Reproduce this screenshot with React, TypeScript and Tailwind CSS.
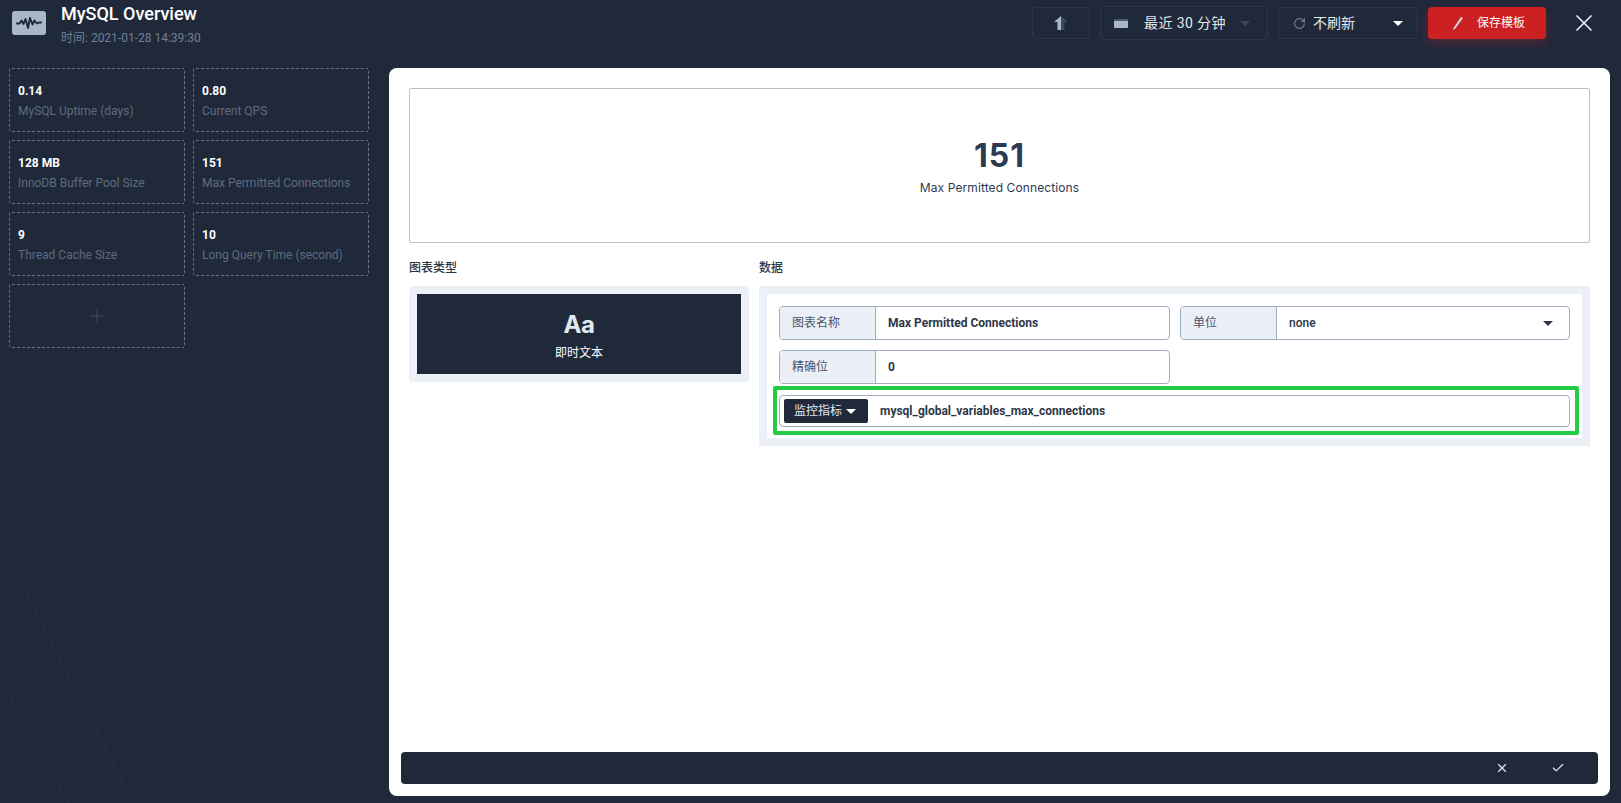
import React from 'react';
import { X, Check, Plus, RotateCw } from 'lucide-react';

const stats = [
  { value: '0.14', label: 'MySQL Uptime (days)' },
  { value: '0.80', label: 'Current QPS' },
  { value: '128 MB', label: 'InnoDB Buffer Pool Size' },
  { value: '151', label: 'Max Permitted Connections' },
  { value: '9', label: 'Thread Cache Size' },
  { value: '10', label: 'Long Query Time (second)' },
];

function Caret({ className = '' }: { className?: string }) {
  return (
    <svg width="10" height="5" viewBox="0 0 10 5" className={className}>
      <path d="M0 0h10L5 5z" fill="currentColor" />
    </svg>
  );
}

function Field({ label, value, caret = false, medium = false }: { label: string; value: string; caret?: boolean; medium?: boolean }) {
  return (
    <div className="flex h-[34px] rounded border border-[#a0aec0]">
      <div className="flex w-[96px] shrink-0 items-center rounded-l-[3px] border-r border-[#a0aec0] bg-[#ebf0f8] pl-3 text-[12px] text-[#4a5568]">{label}</div>
      <div className={`flex flex-1 items-center justify-between pl-3 pr-4 text-[12px] text-[#2d3748] ${medium ? 'font-medium' : 'font-bold'}`}>
        <span>{value}</span>
        {caret && <Caret className="text-[#2d3748]" />}
      </div>
    </div>
  );
}

export default function App() {
  return (
    <div className="relative flex h-[803px] w-[1621px] flex-col overflow-hidden bg-[#20293a] font-['Roboto','Noto_Sans_CJK_SC',sans-serif] text-white">
      {/* faint background streaks, bottom left */}
      <svg width="140" height="260" viewBox="0 0 140 260" fill="none" className="absolute bottom-0 left-0">
        <path d="M0 0L125 243" stroke="#263445" strokeWidth="1" />
        <path d="M0 135L68 260" stroke="#263445" strokeWidth="1" />
      </svg>

      {/* header */}
      <div className="relative flex h-[68px] shrink-0 px-3">
        <div className="mt-[11px] flex h-6 w-[34px] items-center justify-center rounded-[3px] bg-[#a9b8c6]">
          <svg width="28" height="16" viewBox="0 0 28 16" fill="none" stroke="#20293a" strokeWidth="1.9" strokeLinecap="round" strokeLinejoin="round">
            <path d="M2 8.5H4.5L6.5 5.5L8.5 9L10.5 4L13 13L15 3L17.5 9.5L19.5 5.5L22 8.5L24 7.5H26" />
          </svg>
        </div>
        <div className="ml-[15px]">
          <div className="mt-[3px] text-[18px] font-medium leading-[22px]">MySQL Overview</div>
          <div className="mt-[5px] text-[12px] leading-[16px] text-[#718096]">时间: 2021-01-28 14:39:30</div>
        </div>
        <div className="ml-auto mt-[6px] flex h-[34px] items-center gap-[10px] pr-[11px]">
          <div className="flex h-8 w-[58px] items-center justify-center rounded border border-[#2d3748]">
            <svg width="14" height="14" viewBox="0 0 14 14">
              <path d="M7 0L0 6h3.500v8H7z" fill="#a9b8c6" />
              <path d="M7 0l7 6h-3.500v8H7z" fill="#3c4a5c" />
            </svg>
          </div>
          <div className="flex h-[34px] w-[168px] items-center rounded border border-[#2d3748] pl-[13px]">
            <svg width="14" height="10" viewBox="0 0 14 10">
              <rect y="2" width="14" height="8" rx="1" fill="#a9b8c6" />
              <rect y="1" width="14" height="2" fill="#4a5a6c" />
            </svg>
            <span className="ml-[16px] text-[14px] tracking-[0.4px] text-[#e2e8f0]">最近 30 分钟</span>
            <Caret className="ml-[14px] text-[#3a4a5c]" />
          </div>
          <div className="flex h-8 w-[140px] items-center rounded border border-[#2d3748] pl-[14px]">
            <RotateCw size={13} className="text-[#718096]" />
            <span className="ml-[7px] text-[14px] text-[#e2e8f0]">不刷新</span>
            <Caret className="ml-[38px] text-white" />
          </div>
          <div className="flex h-8 w-[118px] items-center rounded bg-[#cc2023] pl-[25px] shadow-[0_4px_12px_rgba(204,32,35,0.3)]">
            <svg width="10" height="13" viewBox="0 0 10 13">
              <path d="M8 0L10 1L2 12L0 13L0.500 11z" fill="#d4d8de" />
            </svg>
            <span className="ml-[14px] text-[12px] text-[#f7fafc]">保存模板</span>
          </div>
          <X size={28} strokeWidth={1.5} className="ml-[14px] text-[#e2e8f0]" />
        </div>
      </div>

      <div className="relative flex flex-1 pb-[7px] pr-[11px]">
        {/* left stat cards */}
        <div className="grid w-[389px] shrink-0 grid-cols-[176px_176px] content-start gap-x-2 gap-y-2 pl-[9px]">
          {stats.map((s) => (
            <div key={s.label} className="h-[64px] rounded-[3px] border border-dashed border-[#667387] px-2 pt-[14px]">
              <div className="text-[12px] font-bold leading-[16px]">{s.value}</div>
              <div className="mt-1 text-[12px] leading-[16px] text-[#5f6b7d]">{s.label}</div>
            </div>
          ))}
          <div className="flex h-[64px] items-center justify-center rounded-[3px] border border-dashed border-[#667387]">
            <Plus size={24} strokeWidth={1} className="text-[#3a4d5e]" />
          </div>
        </div>

        {/* editor panel */}
        <div className="flex flex-1 flex-col rounded-lg bg-white px-3 pb-3 pt-5">
          <div className="mx-2 flex h-[155px] shrink-0 flex-col items-center justify-center rounded-[2px] border border-[#b8c2cc] pt-[2px] font-['Inter','Noto_Sans_CJK_SC',sans-serif]">
            <div className="text-[32px] font-bold leading-[38px] tracking-[1px] text-[#2d3a54]">151</div>
            <div className="mt-1 text-[12px] leading-[18px] tracking-[0.1px] text-[#2d3a54]">Max Permitted Connections</div>
          </div>
          <div className="mx-2 mt-[17px] flex flex-1 gap-[10px]">
            <div className="w-[340px] shrink-0">
              <div className="text-[12px] font-medium leading-[16px] text-[#2d3748]">图表类型</div>
              <div className="mt-[10px] rounded bg-[#ecf0f7] p-2">
                <div className="flex h-20 flex-col items-center justify-center bg-[#20293a] pt-[2px] font-['Inter','Noto_Sans_CJK_SC',sans-serif]">
                  <div className="text-[24px] font-bold leading-[30px] tracking-[-0.5px] text-[#e2e8f0]">Aa</div>
                  <div className="mt-[5px] text-[12px] leading-[16px] text-white">即时文本</div>
                </div>
              </div>
            </div>
            <div className="flex-1">
              <div className="text-[12px] font-medium leading-[16px] text-[#2d3748]">数据</div>
              <div className="mt-[10px] bg-[#ecf0f7] p-2">
                <div className="bg-white pb-[3px] pl-3 pr-3 pt-3">
                  <div className="grid grid-cols-[391px_390px] gap-x-[10px] gap-y-[10px]">
                    <Field label="图表名称" value="Max Permitted Connections" />
                    <Field label="单位" value="none" caret medium />
                    <Field label="精确位" value="0" />
                  </div>
                  <div className="-ml-[6px] -mr-[9px] mt-[2px] rounded-[2px] border-4 border-[#22cc44] pb-1 pl-[2px] pr-[5px] pt-[5px]">
                    <div className="flex h-8 items-center rounded border border-[#a0aec0] pl-1">
                      <div className="flex h-6 w-[84px] items-center gap-1 rounded-[2px] bg-[#20293a] pl-[10px] text-[12px] text-[#e2e8f0]">
                        监控指标
                        <Caret className="text-white" />
                      </div>
                      <span className="ml-3 text-[12px] font-bold text-[#2d3748]">mysql_global_variables_max_connections</span>
                    </div>
                  </div>
                </div>
              </div>
            </div>
          </div>
          <div className="flex h-8 shrink-0 items-center justify-end rounded bg-[#20293a] pr-[33px]">
            <X size={14} className="text-[#e2e8f0]" />
            <Check size={14} className="ml-[42px] text-[#e2e8f0]" />
          </div>
        </div>
      </div>
    </div>
  );
}
